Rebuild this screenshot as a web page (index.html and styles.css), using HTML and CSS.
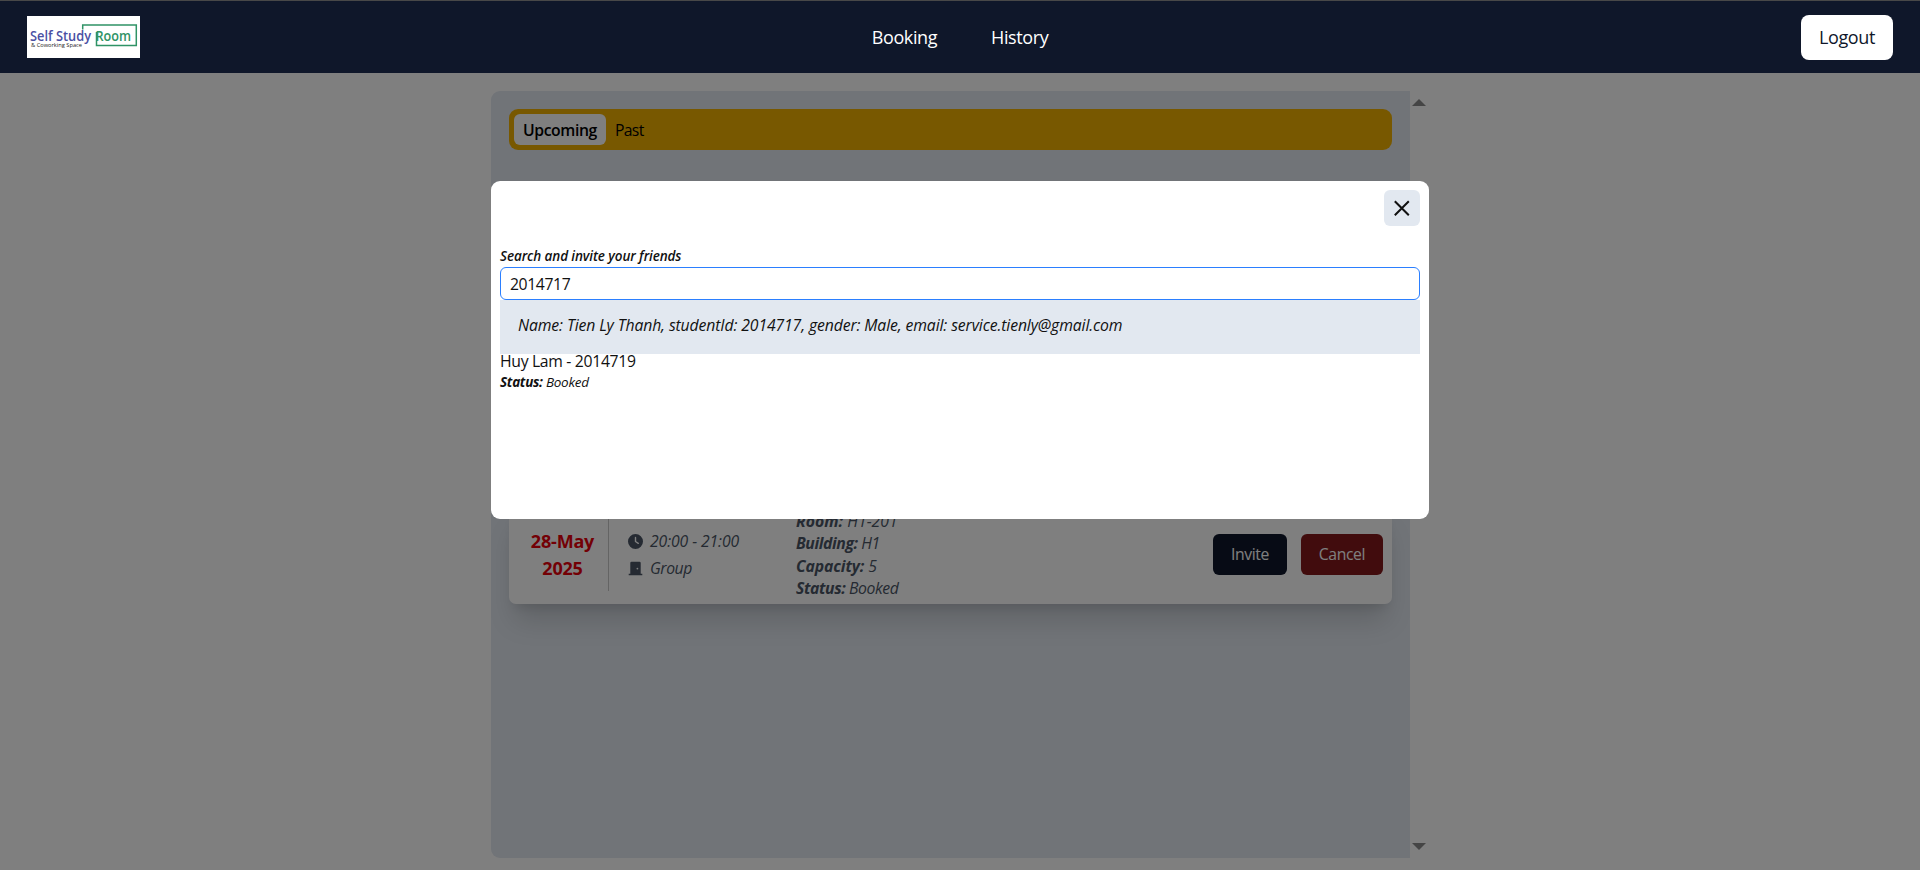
FILE: index.html
```html
<!DOCTYPE html>
<html lang="en">
<head>
<meta charset="utf-8">
<title>Self Study Room</title>
<link rel="stylesheet" href="styles.css">
</head>
<body>
<header class="header">
  <div class="logo">
    <svg width="113" height="42" viewBox="0 0 113 42">
      <path d="M55.7 13.500V9H109.300V29.500H69.500V16" fill="none" stroke="#2f9366" stroke-width="1.500"/>
      <text class="logo-self" x="3" y="25" textLength="61" lengthAdjust="spacingAndGlyphs">Self Study</text>
      <text class="logo-room" x="68.500" y="25" textLength="35.500" lengthAdjust="spacingAndGlyphs">Room</text>
      <text class="logo-sub" x="4" y="30.600" textLength="51" lengthAdjust="spacingAndGlyphs">&amp; Coworking Space</text>
    </svg>
  </div>
  <nav class="nav"><a class="nav-booking">Booking</a><a class="nav-history">History</a></nav>
  <button class="logout"><span>Logout</span></button>
</header>
<main class="main">
  <section class="panel">
    <div class="tabs"><span class="tab tab-active"><span>Upcoming</span></span><span class="tab"><span class="past">Past</span></span></div>
    <article class="card">
      <div class="date"><span>28-May</span><span>2025</span></div>
      <div class="times">
        <div class="meta"><svg width="15" height="15" viewBox="0 0 512 512"><path fill="currentColor" d="M256 0a256 256 0 1 1 0 512A256 256 0 1 1 256 0zM232 120v136c0 8 4 15.500 10.700 20l96 64c11 7.400 25.900 4.400 33.300-6.700s4.400-25.900-6.700-33.300L280 243.200V120c0-13.300-10.700-24-24-24s-24 10.700-24 24z"/></svg><span class="hours">20:00 - 21:00</span></div>
        <div class="meta"><svg width="15" height="15" viewBox="0 0 15 15"><path fill="currentColor" fill-rule="evenodd" d="M2.300 2Q2.300.8 3.500.8H11.500Q12.700.8 12.700 2V12.700H14.300V14.300H.7V12.700H2.300ZM9.400 6.700A.9.9 0 1 0 9.400 8.500A.9.9 0 1 0 9.400 6.700Z"/></svg><span class="group">Group</span></div>
      </div>
      <div class="details">
        <div><span class="room"><b>Room:</b> H1-201</span></div>
        <div><span><b>Building:</b> H1</span></div>
        <div><span class="capacity"><b>Capacity:</b> 5</span></div>
        <div><span><b>Status:</b> Booked</span></div>
      </div>
      <div class="actions"><button class="btn invite"><span>Invite</span></button><button class="btn cancel"><span>Cancel</span></button></div>
    </article>
  </section>
  <div class="scroll">
    <svg width="14" height="7" viewBox="0 0 14 7"><path d="M0 7L7 0L14 7Z" fill="#8b8b8b"/></svg>
    <svg width="14" height="7" viewBox="0 0 14 7"><path d="M0 0H14L7 7Z" fill="#8b8b8b"/></svg>
  </div>
</main>
<div class="overlay">
  <div class="modal">
    <button class="close"><svg width="16" height="16" viewBox="0 0 16 16"><path d="M.8 1.300L14.800 15.300M14.800 1.300L.8 15.300" stroke="#111" stroke-width="2"/></svg></button>
    <div class="label"><span>Search and invite your friends</span></div>
    <div class="input"><span>2014717</span></div>
    <div class="result"><span>Name: Tien Ly Thanh, studentId: 2014717, gender: Male, email: service.tienly@gmail.com</span></div>
    <div class="friend"><span>Huy Lam - 2014719</span></div>
    <div class="status"><span><b>Status:</b> Booked</span></div>
  </div>
</div>
</body>
</html>
```
FILE: styles.css
```css
* { box-sizing: border-box; }
body { margin: 0; height: 870px; overflow: hidden; position: relative; background: #fff; color: #111; font: 15.75px/22.5px "Open Sans", "Noto Sans", sans-serif; letter-spacing: -0.4px; }
button { border: 0; font: inherit; letter-spacing: inherit; padding: 0; }
span { white-space: nowrap; }
.header { position: relative; z-index: 2; height: 73px; border-top: 1px solid #484848; background: #0f172a; display: grid; grid-template-columns: 1fr auto 1fr; align-items: center; padding: 0 27px; }
.logo { width: 113px; height: 42px; background: #fff; }
.logo svg { display: block; }
.logo-self, .logo-room { font: 600 13.5px "Open Sans", sans-serif; letter-spacing: 0; fill: #4a4fa3; }
.logo-room { fill: #2f9366; }
.logo-sub { font: 6px "Open Sans", sans-serif; letter-spacing: 0; fill: #222; }
.nav { display: flex; gap: 54px; color: #fff; font-size: 18px; line-height: 27px; }
.logout { justify-self: end; width: 92px; height: 45px; border-radius: 8px; background: #fff; color: #0f172a; font-size: 18px; }
.main { display: flex; height: 797px; padding: 18px 491px 12px; }
.panel { width: 919px; border-radius: 9px 0 0 9px; background: #e2e8f0; padding: 18px; display: flex; flex-direction: column; gap: 355px; }
.tabs { height: 41px; flex: none; border-radius: 9px; background: #f0b100; padding: 5px; display: flex; color: #000; }
.tab { height: 31px; line-height: 32px; padding: 0 9px; border-radius: 6px; }
.tab-active { width: 92px; background: #fff; font-weight: 600; }
.past { letter-spacing: -0.7px; }
.card { height: 99px; flex: none; border-radius: 7px; background: #fff; display: flex; align-items: center; box-shadow: 0 22px 28px -6px rgba(0,0,0,.15), 0 8px 12px -6px rgba(0,0,0,.12); color: #4a5565; }
.date { align-self: flex-start; width: 100px; height: 86px; border-right: 1px solid #c8c8c8; display: flex; flex-direction: column; justify-content: center; align-items: center; padding: 13px 0 0 8px; line-height: 27px; font-size: 18px; font-weight: 700; letter-spacing: -0.2px; color: #e7000b; }
.times { width: 187px; padding: 0 0 0 19px; display: grid; gap: 4.500px; font-style: italic; }
.hours { letter-spacing: -0.1px; }
.meta { display: flex; align-items: center; gap: 7px; }
.details { width: 400px; line-height: 22.400px; font-style: italic; }
.room { letter-spacing: 0.05px; }
.capacity { letter-spacing: -0.1px; }
.actions { margin-left: auto; margin-right: 9px; display: flex; gap: 14px; }
.btn { height: 41px; border-radius: 6px; color: #fff; }
.invite { width: 74px; background: #0f172b; }
.cancel { width: 82px; background: #82181a; }
.scroll { width: 18px; display: flex; flex-direction: column; justify-content: space-between; align-items: center; padding: 8px 0; flex: none; }
.overlay { position: absolute; inset: 0; z-index: 1; background: rgba(0,0,0,.5); display: flex; flex-direction: column; align-items: center; padding-top: 181px; }
.modal { width: 938px; height: 338px; border-radius: 9px; background: #fff; padding: 9px; display: flex; flex-direction: column; }
.close { align-self: flex-end; flex: none; width: 36px; height: 36px; border-radius: 6px; background: #e2e8f0; display: grid; place-items: center; }
.label { margin-top: 20px; height: 21px; line-height: 20px; font-size: 13.500px; letter-spacing: -0.1px; font-style: italic; font-weight: 600; }
.input { height: 33px; border: 1px solid #2b7fff; border-radius: 6px; padding: 0 9px; line-height: 33px; }
.result { height: 54px; padding: 0 18px; line-height: 51px; background: #e2e8f0; font-style: italic; letter-spacing: -0.117px; }
.friend { height: 18px; line-height: 15px; letter-spacing: -0.32px; }
.status { line-height: 20px; font-size: 13.500px; font-style: italic; letter-spacing: -0.28px; }
```
